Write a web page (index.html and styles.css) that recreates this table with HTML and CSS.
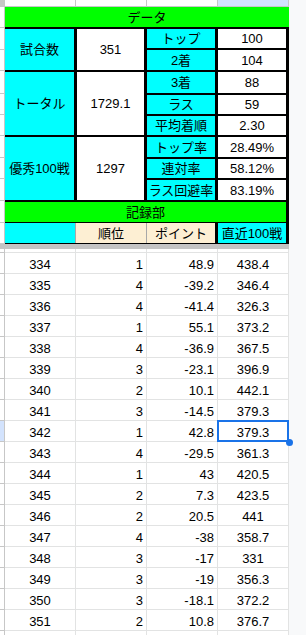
FILE: index.html
```html
<!DOCTYPE html>
<html lang="ja">
<head>
<meta charset="utf-8">
<title>データ</title>
<link rel="stylesheet" href="styles.css">
</head>
<body>
<div class="page">
  <div class="sheet">
    <div class="colhead">
      <div class="corner"></div>
      <div class="ch"></div>
      <div class="ch"></div>
      <div class="ch"></div>
      <div class="ch ch-sel"></div>
    </div>

    <div class="frozen">
      <div class="rh-col">
        <div class="rh h21"></div>
        <div class="rh h22"></div>
        <div class="rh h21"></div>
        <div class="rh h23"></div>
        <div class="rh h21"></div>
        <div class="rh h21"></div>
        <div class="rh h22"></div>
        <div class="rh h21"></div>
        <div class="rh h22"></div>
        <div class="rh h22"></div>
        <div class="rh h21"></div>
      </div>
      <div class="fz-main">
        <div class="title">データ</div>
        <div class="block">
          <div class="lab span2">試合数</div>
          <div class="val span2">351</div>
          <div class="lab">トップ</div>
          <div class="val">100</div>
          <div class="lab">2着</div>
          <div class="val">104</div>
          <div class="lab span3">トータル</div>
          <div class="val span3">1729.1</div>
          <div class="lab">3着</div>
          <div class="val">88</div>
          <div class="lab">ラス</div>
          <div class="val">59</div>
          <div class="lab">平均着順</div>
          <div class="val">2.30</div>
          <div class="lab span3">優秀100戦</div>
          <div class="val span3">1297</div>
          <div class="lab">トップ率</div>
          <div class="val">28.49%</div>
          <div class="lab">連対率</div>
          <div class="val">58.12%</div>
          <div class="lab">ラス回避率</div>
          <div class="val">83.19%</div>
        </div>
        <div class="title rec">記録部</div>
        <div class="hdr">
          <div class="hc hc-a"></div>
          <div class="hc hc-b">順位</div>
          <div class="hc hc-c">ポイント</div>
          <div class="hc hc-d">直近100戦</div>
        </div>
      </div>
    </div>

    <div class="divider"></div>

    <div class="data">
      <div class="row partial"><div class="rh"></div><div class="c"></div><div class="c"></div><div class="c"></div><div class="c"></div></div>
      <div class="row"><div class="rh"></div><div class="c center">334</div><div class="c right">1</div><div class="c right">48.9</div><div class="c center">438.4</div></div>
      <div class="row"><div class="rh"></div><div class="c center">335</div><div class="c right">4</div><div class="c right">-39.2</div><div class="c center">346.4</div></div>
      <div class="row"><div class="rh"></div><div class="c center">336</div><div class="c right">4</div><div class="c right">-41.4</div><div class="c center">326.3</div></div>
      <div class="row"><div class="rh"></div><div class="c center">337</div><div class="c right">1</div><div class="c right">55.1</div><div class="c center">373.2</div></div>
      <div class="row"><div class="rh"></div><div class="c center">338</div><div class="c right">4</div><div class="c right">-36.9</div><div class="c center">367.5</div></div>
      <div class="row"><div class="rh"></div><div class="c center">339</div><div class="c right">3</div><div class="c right">-23.1</div><div class="c center">396.9</div></div>
      <div class="row"><div class="rh"></div><div class="c center">340</div><div class="c right">2</div><div class="c right">10.1</div><div class="c center">442.1</div></div>
      <div class="row"><div class="rh"></div><div class="c center">341</div><div class="c right">3</div><div class="c right">-14.5</div><div class="c center">379.3</div></div>
      <div class="row"><div class="rh rh-sel"></div><div class="c center">342</div><div class="c right">1</div><div class="c right">42.8</div><div class="c center sel">379.3</div></div>
      <div class="row"><div class="rh"></div><div class="c center">343</div><div class="c right">4</div><div class="c right">-29.5</div><div class="c center">361.3</div></div>
      <div class="row"><div class="rh"></div><div class="c center">344</div><div class="c right">1</div><div class="c right">43</div><div class="c center">420.5</div></div>
      <div class="row"><div class="rh"></div><div class="c center">345</div><div class="c right">2</div><div class="c right">7.3</div><div class="c center">423.5</div></div>
      <div class="row"><div class="rh"></div><div class="c center">346</div><div class="c right">2</div><div class="c right">20.5</div><div class="c center">441</div></div>
      <div class="row"><div class="rh"></div><div class="c center">347</div><div class="c right">4</div><div class="c right">-38</div><div class="c center">358.7</div></div>
      <div class="row"><div class="rh"></div><div class="c center">348</div><div class="c right">3</div><div class="c right">-17</div><div class="c center">331</div></div>
      <div class="row"><div class="rh"></div><div class="c center">349</div><div class="c right">3</div><div class="c right">-19</div><div class="c center">356.3</div></div>
      <div class="row"><div class="rh"></div><div class="c center">350</div><div class="c right">3</div><div class="c right">-18.1</div><div class="c center">372.2</div></div>
      <div class="row"><div class="rh"></div><div class="c center">351</div><div class="c right">2</div><div class="c right">10.8</div><div class="c center">376.7</div></div>
      <div class="row"><div class="rh"></div><div class="c"></div><div class="c"></div><div class="c"></div><div class="c"></div></div>
    </div>
  </div>
  <div class="gutter"></div>
</div>
</body>
</html>
```

FILE: styles.css
```css
* {
  box-sizing: border-box;
  margin: 0;
  padding: 0;
}

html, body {
  width: 306px;
  height: 635px;
  overflow: hidden;
  background: #ffffff;
}

body {
  font-family: "Liberation Sans", "Noto Sans CJK JP", sans-serif;
  font-size: 13px;
  color: #000000;
}

.page {
  display: flex;
  height: 635px;
}

.sheet {
  width: 289px;
  display: flex;
  flex-direction: column;
  flex-shrink: 0;
}

.gutter {
  width: 17px;
  background: #f8f9fa;
  flex-shrink: 0;
}

/* column header strip */
.colhead {
  display: flex;
  height: 7px;
  border-bottom: 1px solid #c7c7c7;
  flex-shrink: 0;
}

.corner {
  width: 5px;
  background: #c7c7c7;
}

.ch {
  width: 71px;
  background: #ffffff;
  border-right: 1px solid #c7c7c7;
}

.ch-sel {
  background: #d3e3fd;
}

/* frozen rows */
.frozen {
  display: flex;
  flex-shrink: 0;
}

.rh-col {
  width: 5px;
  display: flex;
  flex-direction: column;
}

.rh {
  width: 5px;
  background: #ffffff;
  border-right: 1px solid #c7c7c7;
  border-bottom: 1px solid #c7c7c7;
}

.h21 { height: 21px; }
.h22 { height: 22px; }
.h23 { height: 23px; }

.fz-main {
  width: 284px;
  display: flex;
  flex-direction: column;
}

.title {
  height: 20px;
  background: #00ff00;
  display: flex;
  align-items: center;
  justify-content: center;
  line-height: 15px;
}

.rec {
  border-right: 3px solid #000000;
}

.block {
  display: grid;
  grid-template-columns: 69px 67px 68px 68px;
  grid-template-rows: 19px 20px 21px 19px 19px 20px 19px 20px;
  gap: 2px 3px;
  padding: 2px 3px 2px 0;
  background: #000000;
}

.lab,
.val {
  display: flex;
  align-items: center;
  justify-content: center;
  line-height: 15px;
  white-space: nowrap;
}

.lab {
  background: #00ffff;
}

.val {
  background: #ffffff;
}

.span2 { grid-row: span 2; }
.span3 { grid-row: span 3; }

.hdr {
  display: flex;
  height: 22px;
  border-top: 1px solid #000000;
  border-bottom: 1px solid #000000;
}

.hc {
  display: flex;
  align-items: center;
  justify-content: center;
  line-height: 15px;
  white-space: nowrap;
}

.hc-a {
  width: 71px;
  background: #00ffff;
  border-right: 1px solid #a8a8a8;
}

.hc-b {
  width: 71px;
  background: #fdefd3;
  border-right: 1px solid #a8a8a8;
}

.hc-c {
  width: 68px;
  background: #fdefd3;
}

.hc-d {
  width: 74px;
  background: #00ffff;
  border-left: 3px solid #000000;
  border-right: 3px solid #000000;
}

/* frozen divider */
.divider {
  height: 5px;
  background: #c4c4c4;
  flex-shrink: 0;
}

/* data rows */
.data {
  display: flex;
  flex-direction: column;
}

.row {
  display: flex;
  height: 21px;
  flex-shrink: 0;
}

.row.partial {
  height: 4px;
}

.row > div {
  border-right: 1px solid #e2e3e3;
  border-bottom: 1px solid #e2e3e3;
}

.row > .rh {
  width: 5px;
  border-color: #c7c7c7;
}

.row > .rh-sel {
  background: #d3e3fd;
}

.c {
  width: 71px;
  display: flex;
  align-items: flex-end;
  line-height: 15px;
  padding-bottom: 1px;
  white-space: nowrap;
}

.c.center {
  justify-content: center;
}

.c.right {
  justify-content: flex-end;
  padding-right: 3px;
}

.c.sel {
  position: relative;
}

.c.sel::before {
  content: "";
  position: absolute;
  left: -1px;
  top: -1px;
  right: -1px;
  bottom: -1px;
  border: 2px solid #1a73e8;
}

.c.sel::after {
  content: "";
  position: absolute;
  right: -5px;
  bottom: -5px;
  width: 7px;
  height: 7px;
  border-radius: 50%;
  background: #1a73e8;
}
```
